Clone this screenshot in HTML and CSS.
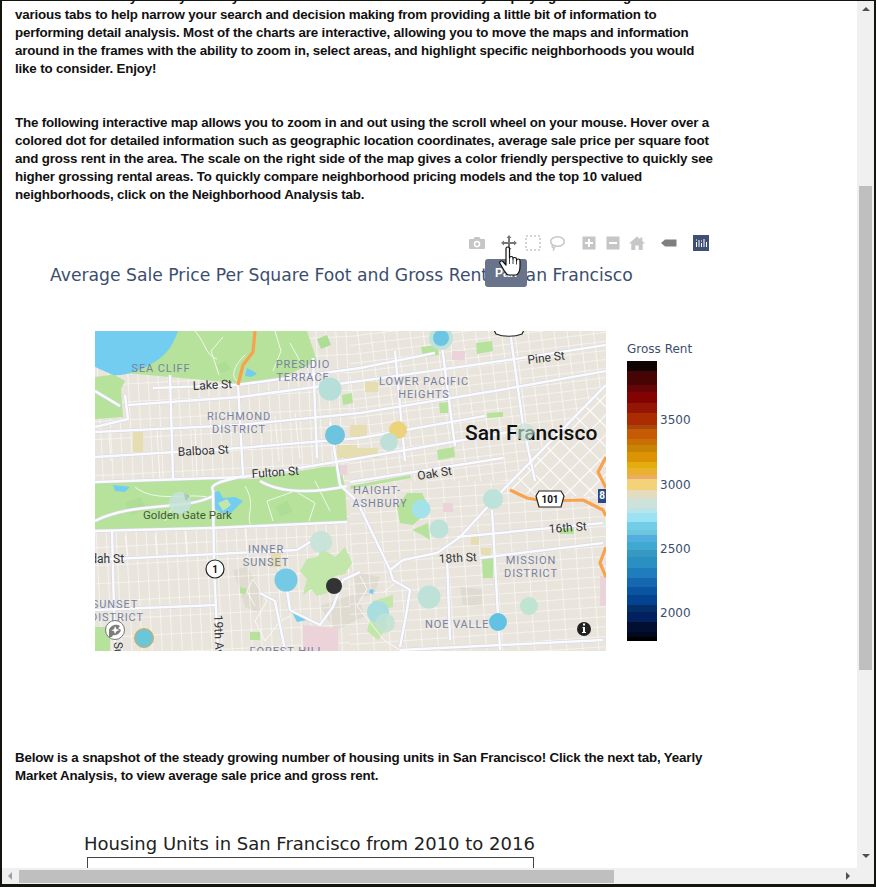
FILE: index.html
```html
<!DOCTYPE html>
<html lang="en">
<head>
    <meta charset="UTF-8">
    <title>San Francisco Housing Dashboard</title>
    <link rel="stylesheet" href="styles.css">
</head>
<body>
<div class="frame">
    <div class="content">
        <p class="intro">This dashboard is your way to analyze the rental market of San Francisco by displaying data through the<br>
        various tabs to help narrow your search and decision making from providing a little bit of information to
        performing detail analysis. Most of the charts are interactive, allowing you to move the maps and information
        around in the frames with the ability to zoom in, select areas, and highlight specific neighborhoods you would
        like to consider. Enjoy!</p>

        <p class="second">The following interactive map allows you to zoom in and out using the scroll wheel on your mouse. Hover over a
        colored dot for detailed information such as geographic location coordinates, average sale price per square foot
        and gross rent in the area. The scale on the right side of the map gives a color friendly perspective to quickly see
        higher grossing rental areas. To quickly compare neighborhood pricing models and the top 10 valued
        neighborhoods, click on the Neighborhood Analysis tab.</p>

        <div class="chart">
            <div class="modebar">
                <div class="mode-group">
                    <span class="mode-btn"><svg viewBox="0 0 16 16" width="16" height="16"><path class="ico" fill-rule="evenodd" d="M1 4h3.500l1-2h5l1 2H15a1 1 0 0 1 1 1v8a1 1 0 0 1-1 1H1a1 1 0 0 1-1-1V5a1 1 0 0 1 1-1zm7 1.800a3.300 3.300 0 1 0 0 6.600 3.300 3.300 0 0 0 0-6.600zm0 1.500a1.800 1.800 0 1 1 0 3.600 1.800 1.800 0 0 1 0-3.600z"/></svg></span>
                </div>
                <div class="mode-group">
                    <span class="mode-btn"><svg viewBox="0 0 16 16" width="16" height="16"><path class="ico-on" d="M8 0l2.500 3H9v4h4V5.500L16 8l-3 2.500V9H9v4h1.500L8 16l-2.500-3H7V9H3v1.500L0 8l3-2.500V7h4V3H5.500z"/></svg></span>
                    <span class="mode-btn"><svg viewBox="0 0 16 16" width="16" height="16"><rect x="1" y="1" width="14" height="14" class="ico-line" stroke-dasharray="2 2"/></svg></span>
                    <span class="mode-btn"><svg viewBox="0 0 16 16" width="16" height="16"><ellipse cx="8.500" cy="6.500" rx="6.800" ry="4.800" class="ico-line"/><path class="ico-line" d="M3.500 10c-1 2 .5 3.500 2 2.500-.5 1-.5 2-1.500 3"/></svg></span>
                </div>
                <div class="mode-group">
                    <span class="mode-btn"><svg viewBox="0 0 16 16" width="16" height="16"><path class="ico" fill-rule="evenodd" d="M1.500 1.500h13v13h-13zM7 4v3H4v2h3v3h2V9h3V7H9V4z"/></svg></span>
                    <span class="mode-btn"><svg viewBox="0 0 16 16" width="16" height="16"><path class="ico" fill-rule="evenodd" d="M1.500 1.500h13v13h-13zM4 7v2h8V7z"/></svg></span>
                    <span class="mode-btn"><svg viewBox="0 0 16 16" width="16" height="16"><path class="ico" d="M8 1.500L0 8.500h2.300V15h4V10.500h3.400V15h4V8.500H16l-2.700-2.400V2.500h-2v1.800z"/></svg></span>
                </div>
                <div class="mode-group">
                    <span class="mode-btn"><svg viewBox="0 0 16 16" width="16" height="16"><path class="ico-dark" d="M0 8l4-3.500h11.500v7H4z"/></svg></span>
                </div>
                <div class="mode-group">
                    <span class="mode-btn"><svg viewBox="0 0 16 16" width="16" height="16"><rect width="16" height="16" fill="#3f4f75"/><path fill="#fff" d="M3 7h1v5H3zM5.500 5h1v7h-1zM8 8h1v4H8zM10.500 4h1v8h-1zM13 7h1v5h-1zM3 4.500h1v1H3zM8 5.500h1v1H8z"/></svg></span>
                </div>
            </div>

            <h2 class="chart-title">Average Sale Price Per Square Foot and Gross Rent in San Francisco</h2>

            <div class="tip">Pan</div>
            <svg class="hand" viewBox="0 0 25 30" width="25" height="30"><path fill="#fff" stroke="#111" stroke-width="1.200" stroke-linejoin="round" d="M8 2.500c0-2 3.500-2 3.500 0V12c0-2 3.500-2 3.500 0v1c0-2 3.500-2 3.500 0v1.500c0-2 3.500-2 3.500 0V21c0 4-2 8-4.500 8h-6.500c-2.500 0-3.500-2.500-5.500-5.500L2 17.500c-1.200-2 1.500-3.500 3.300-1.500L8 19z"/><path stroke="#111" stroke-width=".8" d="M11.500 12v6M15 13v5M18.500 14.500v4"/></svg>

            <div class="plot">
                <svg class="map" viewBox="0 0 511 320" width="511" height="320">
                    <defs>
                        <pattern id="gridWest" width="10" height="18" patternUnits="userSpaceOnUse" patternTransform="rotate(-3)">
                            <path d="M0 0V18M0 0H10" stroke="#fff" stroke-width="1.100" fill="none"/>
                        </pattern>
                        <pattern id="gridEast" width="13" height="9" patternUnits="userSpaceOnUse" patternTransform="rotate(-7)">
                            <path d="M0 0V9M0 0H13" stroke="#fff" stroke-width="1.200" fill="none"/>
                        </pattern>
                        <pattern id="gridSouth" width="16" height="10" patternUnits="userSpaceOnUse" patternTransform="rotate(-4)">
                            <path d="M0 0V10M0 0H16" stroke="#fff" stroke-width="1.100" fill="none"/>
                        </pattern>
                        <pattern id="gridDiag" width="14" height="14" patternUnits="userSpaceOnUse" patternTransform="rotate(45)">
                            <path d="M0 0V14M0 0H14" stroke="#fff" stroke-width="2" fill="none"/>
                        </pattern>
                        <g id="roads">
                            <path d="M58 57L142 54 265 37 340 22M33 74L145 66 265 50 420 28 511 14M0 101L145 94 265 82 405 59 511 40M0 126L145 117 265 107 390 85M0 151L148 146 265 127 420 100M0 200L118 197 252 191M255 151L408 127"/>
                            <path d="M295 239L308 229 342 222 365 206 408 159 511 54"/>
                            <path d="M415 0L428 94 440 150M143 54L148 144M118 159L119 236 123 319M75 44L78 147M218 27L222 127M235 91L245 154M30 64L33 88 0 96"/>
                            <path d="M0 229L202 219 225 205M0 279L122 274M192 259L195 279 225 294 238 276 248 249 265 241M295 239L298 249 315 259 312 279 305 316M305 319L508 309M362 206L508 192M385 227L508 212"/>
                            <path d="M397 179L405 319M352 226L355 309M17 199L20 319M300 20L310 130M345 0L360 115M190 319L180 270 165 262M245 154L262 170 295 239"/>
                            <path d="M118 159C112 150 150 147 148 144M0 60L25 75M0 190C40 170 90 180 118 165M165 150C190 165 230 160 252 155"/>
                        </g>
                    </defs>

                    <rect class="land" width="511" height="320"/>
                    <!-- hills, under the street grid -->
                    <path class="hill" d="M138 239L152 236 168 262 166 282 150 276zM258 240L285 246 280 262 262 268zM365 256L388 258 386 276 368 274zM225 275L262 262 270 285 240 300z"/>
                    <rect width="255" height="320" fill="url(#gridWest)"/>
                    <rect x="255" width="256" height="150" fill="url(#gridEast)"/>
                    <rect x="255" y="150" width="256" height="170" fill="url(#gridSouth)"/>
                    <path d="M412 157L511 54V165H440z" class="land"/>
                    <path d="M412 157L511 54V165H440z" fill="url(#gridDiag)"/>

                    <!-- parks -->
                    <path class="park" d="M70 0H212L222 30 180 50 142 52 75 46 30 42 0 46V88L28 86 26 58 30 50 20 44z"/>
                    <path class="park" d="M0 152L60 149 160 148 228 136 245 135 250 155 252 190 118 196 0 199z"/>
                    <path class="park" d="M326 16L343 14 344 24 328 26zM381 12L397 10 398 20 382 23zM344 72L353 71 353 82 345 82zM392 82L408 81 408 86 392 87zM342 119L359 116 360 126 343 129zM302 176L312 162 327 162 335 179 318 194 305 192zM317 199L333 192 335 209 327 204zM387 227L398 227 398 247 388 247zM0 296H15V320H0zM155 301H165V309H155zM145 256L152 258 150 264 145 262zM465 197H479V203H465zM247 64L257 62 258 72 248 74zM255 155L315 144 316 147 255 158z"/>
                    <path class="park-light" d="M205 240L212 228 222 226 228 218 240 226 250 216 257 232 250 243 240 245 232 262 222 265 216 258 208 264 212 248zM278 270L298 264 298 276 290 278 292 296 283 309 272 300 275 288z"/>
                    <path class="park-dark" d="M30 172L45 166 52 178 36 184zM180 176L192 170 198 180 186 186zM122 35L130 30 136 38 126 42zM222 8L232 4 236 14 226 18z"/>
                    <path class="tan" d="M38 101H48V121H38zM255 94H272V107H255zM270 51H283V61H270zM255 117H283V127H255zM242 114H262V127H242zM176 221H186V236H176zM376 206H384V214H376zM386 217H396V224H386z"/>
                    <path class="pink" d="M357 20H370V29H357zM245 134H252V144H245zM208 294L243 297V320H208zM505 245H511V275H505zM348 172H358V181H348z"/>

                    <!-- water -->
                    <path class="water" d="M0 0H83C78 14 72 24 58 32 45 40 30 45 18 44L0 36zM117 162L124 160 128 167 140 166 148 170 136 182 126 182 118 176zM195 277L212 289 202 291zM152 37L158 40 162 43 156 46 150 45zM18 154L35 156 30 161 20 160zM275 258L279 259 278 263 274 262z"/>
                    <path class="park-light" d="M123 172L132 168 136 174 128 180z"/>

                    <g class="minor">
                        <path d="M100 0C112 14 110 24 122 28M128 6L116 20 124 44M150 24C140 34 135 44 142 50M180 0L186 20 178 40M195 12L205 30M40 156C60 172 90 162 112 166M150 155C162 175 150 185 156 194M178 190L172 170 200 160 220 172 214 190M220 150L235 180M70 190L80 172"/>
                        <path d="M160 275L152 260 158 248 172 270 160 290 170 310M265 245L272 258 262 275 290 310 305 319M300 252L288 262M170 310L185 290 195 285M14 102L16 130M62 98L65 150M100 96L102 145M180 85L184 130M200 82L205 128M30 205L33 225M60 203L62 225M90 200L92 225M150 196L152 220"/>
                    </g>

                    <use href="#roads" class="road-case"/>
                    <use href="#roads" class="road"/>

                    <path class="freeway" d="M160 0L158 21 148 34 143 54M415 159L432 167 448 170 488 169 508 179 511 185M511 216L505 232 511 246M511 126L503 141 511 157"/>

                    <text class="m-area" x="66" y="41">SEA CLIFF</text>
                    <text class="m-area" x="208" y="37">PRESIDIO</text>
                    <text class="m-area" x="208" y="50">TERRACE</text>
                    <text class="m-area" x="144" y="89">RICHMOND</text>
                    <text class="m-area" x="144" y="102">DISTRICT</text>
                    <text class="m-area" x="329" y="54">LOWER PACIFIC</text>
                    <text class="m-area" x="329" y="67">HEIGHTS</text>
                    <text class="m-area" x="282" y="163">HAIGHT-</text>
                    <text class="m-area" x="285" y="176">ASHBURY</text>
                    <text class="m-area" x="171" y="222">INNER</text>
                    <text class="m-area" x="171" y="235">SUNSET</text>
                    <text class="m-area" x="20" y="277">SUNSET</text>
                    <text class="m-area" x="22" y="290">DISTRICT</text>
                    <text class="m-area" x="436" y="233">MISSION</text>
                    <text class="m-area" x="436" y="246">DISTRICT</text>
                    <text class="m-area" x="366" y="297">NOE VALLEY</text>
                    <text class="m-area" x="192" y="324">FOREST HILL</text>

                    <text class="m-road" x="98" y="59" transform="rotate(-3 98 59)">Lake St</text>
                    <text class="m-road" x="83" y="125" transform="rotate(-3 83 125)">Balboa St</text>
                    <text class="m-road" x="157" y="147" transform="rotate(-4 157 147)">Fulton St</text>
                    <text class="m-road" x="433" y="33" transform="rotate(-7 433 33)">Pine St</text>
                    <text class="m-road" x="323" y="149" transform="rotate(-9 323 149)">Oak St</text>
                    <text class="m-road" x="-18" y="232">Judah St</text>
                    <text class="m-road" x="119" y="284" transform="rotate(88 119 284)">19th Ave</text>
                    <text class="m-road" x="19" y="311" transform="rotate(88 19 311)">Sunset</text>
                    <text class="m-road" x="454" y="202" transform="rotate(-4 454 202)">16th St</text>
                    <text class="m-road" x="344" y="232" transform="rotate(-3 344 232)">18th St</text>
                    <text class="m-park" x="48" y="188">Golden Gate Park</text>
                    <text class="m-city" x="370" y="109">San Francisco</text>

                    <!-- route shields -->
                    <g>
                        <path class="shield" d="M444 160H466L469 165 466 176H444L441 165z"/>
                        <text class="m-shield" x="455" y="172">101</text>
                        <path class="shield" d="M401 -8H427L430 -3 427 3C420 6 408 6 401 3L398 -3z"/>
                        <path d="M503 158H511V172H503z" fill="#2a4a86"/>
                        <text class="m-shield-w" x="507" y="168">8</text>
                        <circle cx="120" cy="238" r="9" fill="#fff" stroke="#222" stroke-width="1.200"/>
                        <text class="m-shield" x="120" y="242">1</text>
                    </g>
                    <path d="M89 162L94 165 92 170 90 168z" fill="#33401f"/>

                    <g class="bubbles">
                        <circle cx="346" cy="7" r="12" fill="#bfe2da"/>
                        <circle cx="346" cy="7" r="8" fill="#6cc6e3"/>
                        <circle cx="235" cy="58" r="11.500" fill="#b5dfd8"/>
                        <circle cx="240" cy="104" r="10" fill="#6cc4df"/>
                        <circle cx="303" cy="99" r="9" fill="#edd27c"/>
                        <circle cx="294" cy="111" r="9" fill="#bde0d8"/>
                        <circle cx="430" cy="101" r="9" fill="#c4e2d4" opacity=".65"/>
                        <circle cx="85" cy="172" r="11" fill="#c5e2da" opacity=".85"/>
                        <circle cx="226" cy="211" r="11" fill="#c4e2d8" opacity=".9"/>
                        <circle cx="191" cy="249" r="11.500" fill="#74c9e4"/>
                        <circle cx="239" cy="255" r="8" fill="#333"/>
                        <circle cx="49" cy="307" r="9.500" fill="#6cc6da" stroke="#eca63c" stroke-width="1"/>
                        <circle cx="398" cy="168" r="10" fill="#bde2da"/>
                        <circle cx="326" cy="178" r="9.500" fill="#a2e2ea" opacity=".95"/>
                        <circle cx="344" cy="198" r="9.500" fill="#bde2da"/>
                        <circle cx="334" cy="266" r="11.500" fill="#bfe2d8"/>
                        <circle cx="283" cy="281" r="11" fill="#a8dee0"/>
                        <circle cx="290" cy="292" r="10" fill="#bfe2d2" opacity=".85"/>
                        <circle cx="434" cy="275" r="9" fill="#bfe4d2"/>
                        <circle cx="403" cy="291" r="9" fill="#62c2e4"/>
                    </g>

                    <!-- mapbox logo and info button -->
                    <circle cx="20" cy="299" r="9.500" fill="#fff" stroke="#777" stroke-width="1"/>
                    <path d="M14 300c0-5 7-8 11-5-1 1-1 2-2 2l3 2c-1 3-4 6-8 5l-1 2h-3z" fill="#7d7d78"/>
                    <path d="M20 295l1.500 3 3 1-3 1.200L20 303l-1-2.800-2.500-1 2.500-1z" fill="#fff"/>
                    <circle cx="489" cy="298" r="7" fill="#222"/>
                    <path d="M488 292.500h2v2h-2zM487.500 296h2.500v5h1v1h-4v-1h1v-4h-.5z" fill="#fff"/>
                </svg>

                <div class="colorscale">
                    <div class="scale-title">Gross Rent</div>
                    <div class="scale-row">
                        <div class="scale-bar"></div>
                        <div class="scale-ticks">
                            <span class="scale-tick">3500</span>
                            <span class="scale-tick">3000</span>
                            <span class="scale-tick">2500</span>
                            <span class="scale-tick">2000</span>
                        </div>
                    </div>
                </div>
            </div>
        </div>

        <p class="third">Below is a snapshot of the steady growing number of housing units in San Francisco! Click the next tab, Yearly
        Market Analysis, to view average sale price and gross rent.</p>

        <h2 class="units-title">Housing Units in San Francisco from 2010 to 2016</h2>
        <div class="units-plot">
            <span class="units-tick">382500</span>
            <div class="units-box"></div>
        </div>
    </div>

    <div class="vscroll">
        <span class="arrow-up"></span>
        <div class="vthumb"></div>
        <span class="arrow-down"></span>
    </div>
    <div class="hscroll">
        <span class="arrow-left"></span>
        <div class="hthumb"></div>
        <span class="arrow-right"></span>
    </div>
    <div class="corner"></div>
</div>
</body>
</html>
```

FILE: styles.css
```css
html, body {
  height: 100%;
}

body {
  margin: 0;
  padding: 1px 2px 3px 2px;
  box-sizing: border-box;
  background-color: #14140f;
  overflow: hidden;
}

.frame {
  display: grid;
  grid-template-columns: 855px 17px;
  grid-template-rows: 867px 16px;
  background-color: #fff;
}

.content {
  overflow: hidden;
  padding-left: 13px;
  font-family: "Liberation Sans", Arial, sans-serif;
}

p {
  width: 702px;
  margin: 0;
  font-size: 13.330px;
  font-weight: bold;
  letter-spacing: -.16px;
  line-height: 18px;
  color: #111;
}

.intro {
  margin-top: -13px;
}

.second {
  margin-top: 36px;
}

.third {
  margin-top: 98px;
}

/* plotly chart */
.chart {
  position: relative;
  width: 698px;
  margin-top: 31px;
}

.modebar {
  display: flex;
  justify-content: flex-end;
  height: 16px;
}

.mode-group {
  display: flex;
  margin-left: 8px;
}

.mode-btn {
  display: flex;
  justify-content: center;
  width: 24px;
}

.ico {
  fill: #c6c6c6;
}

.ico-on {
  fill: #777;
}

.ico-dark {
  fill: #7f7f7f;
}

.ico-line {
  fill: none;
  stroke: #c6c6c6;
  stroke-width: 1.500;
}

.chart-title {
  margin: 12px 0 0 0;
  padding-left: 35px;
  font-family: "DejaVu Sans", Verdana, sans-serif;
  font-size: 17.200px;
  font-weight: normal;
  line-height: 24px;
  color: #3b4e6e;
  white-space: nowrap;
}

.tip {
  position: absolute;
  left: 470px;
  top: 24px;
  width: 42px;
  height: 28px;
  border-radius: 3px;
  background-color: #69738a;
  color: #fff;
  font-size: 12px;
  font-weight: bold;
  line-height: 28px;
  text-align: center;
}

.hand {
  position: absolute;
  left: 483px;
  top: 11px;
}

.plot {
  display: flex;
  margin: 44px 0 0 80px;
}

.map {
  display: block;
}

.land {
  fill: #e9e5dd;
}

.hill {
  fill: #e0dbd1;
}

.park {
  fill: #b6e29c;
}

.park-light {
  fill: #c3e6aa;
}

.park-dark {
  fill: #aedd95;
}

.tan {
  fill: #e6deb0;
}

.pink {
  fill: #ecd3da;
}

.water {
  fill: #72cdf1;
}

.minor {
  fill: none;
  stroke: #fff;
  stroke-width: 1;
  opacity: .8;
}

.road-case {
  fill: none;
  stroke: #d3d6e8;
  stroke-width: 3.600;
}

.road {
  fill: none;
  stroke: #fbfbfd;
  stroke-width: 2.500;
}

.freeway {
  fill: none;
  stroke: #f9a24e;
  stroke-width: 3.200;
  stroke-linejoin: round;
}

.map text {
  font-family: Roboto, "Noto Sans", sans-serif;
}

.map .m-area {
  font-size: 11px;
  letter-spacing: .9px;
  fill: #78829f;
  text-anchor: middle;
}

.map .m-road {
  font-size: 12px;
  fill: #333;
}

.map .m-park {
  font-size: 11.500px;
  fill: #3f5a38;
}

.map .m-city {
  font-size: 21px;
  font-weight: 500;
  fill: #111;
}

.map .m-shield {
  font-size: 10px;
  font-weight: bold;
  fill: #111;
  text-anchor: middle;
}

.map .m-shield-w {
  font-size: 10px;
  font-weight: bold;
  fill: #fff;
  text-anchor: middle;
}

.shield {
  fill: #fff;
  stroke: #222;
  stroke-width: 1.200;
}

.colorscale {
  margin: 11px 0 0 21px;
  font-family: "DejaVu Sans", Verdana, sans-serif;
  color: #3b4e6e;
}

.scale-title {
  font-size: 12px;
  line-height: 15px;
  white-space: nowrap;
  margin-bottom: 4px;
}

.scale-row {
  display: flex;
}

.scale-bar {
  width: 30px;
  height: 280px;
  background-image: linear-gradient(to bottom,
    #0f0403 0 10px, #470404 10px 24px, #650505 24px 31px, #830303 31px 42px,
    #941604 42px 52px, #ab2c03 52px 64px, #a6480a 64px 68px, #c75b05 68px 78px,
    #c87003 78px 84px, #c98404 84px 91px, #dc9406 91px 101px, #e4ad0f 101px 107px,
    #e8b22c 107px 114px, #eaac68 114px 118px, #f3d27a 118px 129px, #e5dcc0 129px 137px,
    #cfe2da 137px 147px, #b9e4e8 147px 152px, #9be2f2 152px 161px, #72cde6 161px 169px,
    #6dc6de 169px 174px, #53aee0 174px 181px, #3fa9d2 181px 189px, #3798c0 189px 196px,
    #2a8fc2 196px 207px, #1f7dbd 207px 217px, #1567b0 217px 226px, #0a55a2 226px 234px,
    #044392 234px 244px, #052f68 244px 251px, #04215f 251px 261px, #020f30 261px 271px,
    #010820 271px 276px, #000 276px 280px);
}

.scale-ticks {
  position: relative;
  width: 40px;
}

.scale-tick {
  position: absolute;
  left: 3px;
  font-size: 12px;
  line-height: 14px;
}

.scale-tick:nth-child(1) {
  top: 52px;
}

.scale-tick:nth-child(2) {
  top: 117px;
}

.scale-tick:nth-child(3) {
  top: 181px;
}

.scale-tick:nth-child(4) {
  top: 245px;
}

/* second chart, cut by the frame */
.units-title {
  margin: 47px 0 0 69px;
  font-family: "DejaVu Sans", Verdana, sans-serif;
  font-size: 18px;
  font-weight: normal;
  line-height: 24px;
  color: #222;
  white-space: nowrap;
}

.units-plot {
  display: flex;
  margin-top: 1px;
}

.units-tick {
  width: 64px;
  padding-right: 8px;
  margin-top: 9px;
  font-family: "DejaVu Sans", Verdana, sans-serif;
  font-size: 12px;
  text-align: right;
  color: #333;
}

.units-box {
  width: 445px;
  height: 40px;
  border: 1px solid #444;
}

/* fake scrollbars of the frame */
.vscroll {
  display: flex;
  flex-direction: column;
  align-items: center;
  background-color: #f0f0f0;
}

.vthumb {
  width: 13px;
  height: 484px;
  margin-top: 175px;
  background-color: #bfbfbf;
}

.arrow-up {
  margin-top: 6px;
  border-left: 4px solid transparent;
  border-right: 4px solid transparent;
  border-bottom: 4px solid #505050;
}

.arrow-down {
  margin-top: 184px;
  border-left: 4px solid transparent;
  border-right: 4px solid transparent;
  border-top: 4px solid #505050;
}

.hscroll {
  display: flex;
  align-items: center;
  background-color: #f0f0f0;
}

.hthumb {
  width: 595px;
  height: 13px;
  margin-left: 7px;
  background-color: #bfbfbf;
}

.arrow-left {
  margin-left: 6px;
  border-top: 4px solid transparent;
  border-bottom: 4px solid transparent;
  border-right: 4px solid #a0a0a0;
}

.arrow-right {
  margin-left: 232px;
  border-top: 4px solid transparent;
  border-bottom: 4px solid transparent;
  border-left: 4px solid #505050;
}

.corner {
  background-color: #f0f0f0;
}
```
